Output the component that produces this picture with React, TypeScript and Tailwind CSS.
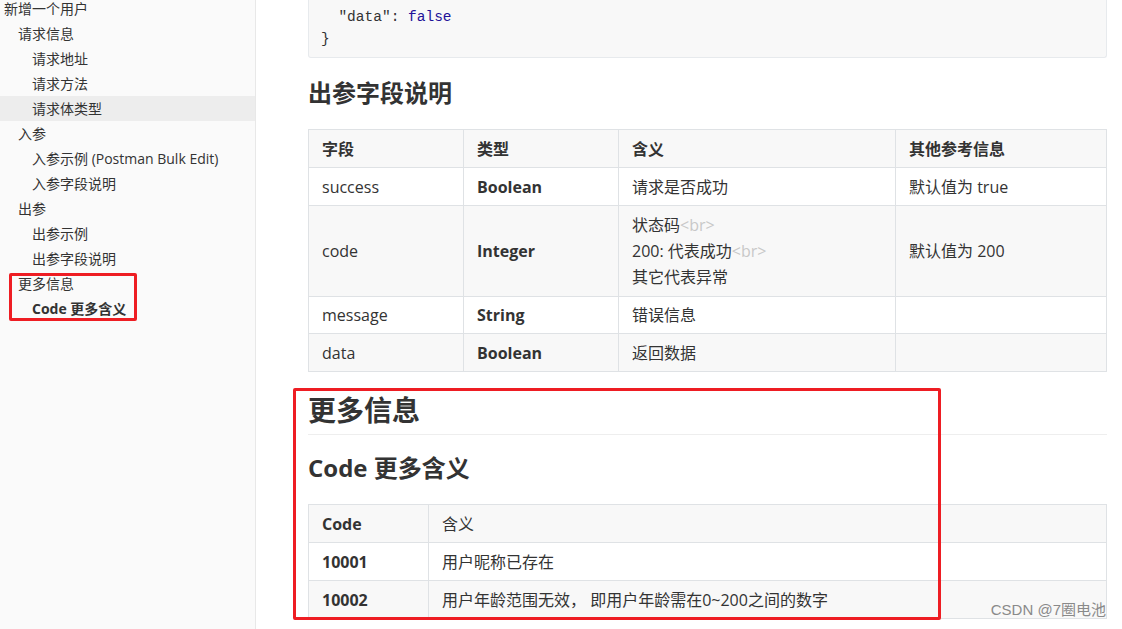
import React from "react";

const FONT = { fontFamily: '"Open Sans", "Noto Sans CJK SC", sans-serif' };
const MONO = { fontFamily: '"Liberation Mono", "DejaVu Sans Mono", monospace' };

interface NavItem {
  label: string;
  level: number;
  active?: boolean;
  bold?: boolean;
}

const nav: NavItem[] = [
  { label: "新增一个用户", level: 0 },
  { label: "请求信息", level: 1 },
  { label: "请求地址", level: 2 },
  { label: "请求方法", level: 2 },
  { label: "请求体类型", level: 2, active: true },
  { label: "入参", level: 1 },
  { label: "入参示例 (Postman Bulk Edit)", level: 2 },
  { label: "入参字段说明", level: 2 },
  { label: "出参", level: 1 },
  { label: "出参示例", level: 2 },
  { label: "出参字段说明", level: 2 },
  { label: "更多信息", level: 1 },
  { label: "Code 更多含义", level: 2, bold: true },
];

const indent = ["pl-[4px]", "pl-[18px]", "pl-[32px]"];

function Br() {
  return <span className="text-[#c8c8c8]">&lt;br&gt;</span>;
}

export default function App() {
  return (
    <div
      className="relative flex h-[629px] w-[1122px] overflow-hidden bg-white text-[#333]"
      style={FONT}
    >
      {/* sidebar outline */}
      <aside className="relative h-full w-[256px] shrink-0 border-r border-[#e8e8e8] bg-[#fafafa]">
        <ul className="-mt-[4px]">
          {nav.map((item) => (
            <li
              key={item.label}
              className={`flex h-[25px] items-center text-[14px] ${indent[item.level]} ${
                item.active ? "bg-[#ededed]" : ""
              } ${item.bold ? "font-bold" : ""}`}
            >
              {item.label}
            </li>
          ))}
        </ul>
        <div className="absolute left-[9px] top-[273px] h-[48px] w-[128px] rounded-[2px] border-[3px] border-[#ee1d23]" />
      </aside>

      {/* document */}
      <main className="relative flex-1 pl-[52px] pr-[15px]">
        <div
          className="rounded-b-[3px] border border-t-0 border-[#e7eaed] bg-[#f8f8f8] pb-[7px] pl-[12px] pt-[6px] text-[14.5px] leading-[22px]"
          style={MONO}
        >
          <div className="whitespace-pre">
            {"  "}
            <span className="text-[#333]">"data"</span>: <span className="text-[#221199]">false</span>
          </div>
          <div>{"}"}</div>
        </div>

        <h3 className="mt-[17px] text-[24px] font-bold leading-[36px]">出参字段说明</h3>

        <table className="mt-[18px] w-full border-collapse text-[16px]">
          <thead>
            <tr className="h-[38px] bg-[#f8f8f8] font-bold">
              <th className="w-[155px] border border-[#dfe2e5] px-[13px] text-left">字段</th>
              <th className="w-[155px] border border-[#dfe2e5] px-[13px] text-left">类型</th>
              <th className="w-[277px] border border-[#dfe2e5] px-[13px] text-left">含义</th>
              <th className="border border-[#dfe2e5] px-[13px] text-left">其他参考信息</th>
            </tr>
          </thead>
          <tbody>
            <tr className="h-[38px]">
              <td className="border border-[#dfe2e5] px-[13px]">success</td>
              <td className="border border-[#dfe2e5] px-[13px] font-bold">Boolean</td>
              <td className="border border-[#dfe2e5] px-[13px]">请求是否成功</td>
              <td className="border border-[#dfe2e5] px-[13px]">默认值为 true</td>
            </tr>
            <tr className="bg-[#f8f8f8]">
              <td className="border border-[#dfe2e5] px-[13px]">code</td>
              <td className="border border-[#dfe2e5] px-[13px] font-bold">Integer</td>
              <td className="border border-[#dfe2e5] px-[13px] py-[6px] leading-[26px]">
                <div>
                  状态码
                  <Br />
                </div>
                <div>
                  200: 代表成功
                  <Br />
                </div>
                <div>其它代表异常</div>
              </td>
              <td className="border border-[#dfe2e5] px-[13px]">默认值为 200</td>
            </tr>
            <tr className="h-[37px]">
              <td className="border border-[#dfe2e5] px-[13px]">message</td>
              <td className="border border-[#dfe2e5] px-[13px] font-bold">String</td>
              <td className="border border-[#dfe2e5] px-[13px]">错误信息</td>
              <td className="border border-[#dfe2e5] px-[13px]"></td>
            </tr>
            <tr className="h-[38px] bg-[#f8f8f8]">
              <td className="border border-[#dfe2e5] px-[13px]">data</td>
              <td className="border border-[#dfe2e5] px-[13px] font-bold">Boolean</td>
              <td className="border border-[#dfe2e5] px-[13px]">返回数据</td>
              <td className="border border-[#dfe2e5] px-[13px]"></td>
            </tr>
          </tbody>
        </table>

        <h2 className="mt-[21px] border-b border-[#eeeeee] pb-[7px] text-[28px] font-bold leading-[34px]">
          更多信息
        </h2>

        <h3 className="mt-[15px] text-[24px] font-bold leading-[36px]">Code 更多含义</h3>

        <table className="mt-[18px] w-full border-collapse text-[16px]">
          <thead>
            <tr className="h-[38px] bg-[#f8f8f8]">
              <th className="w-[120px] border border-[#dfe2e5] px-[13px] text-left font-bold">Code</th>
              <th className="border border-[#dfe2e5] px-[13px] text-left font-normal">含义</th>
            </tr>
          </thead>
          <tbody>
            <tr className="h-[38px]">
              <td className="border border-[#dfe2e5] px-[13px] font-bold">10001</td>
              <td className="border border-[#dfe2e5] px-[13px]">用户昵称已存在</td>
            </tr>
            <tr className="h-[38px] bg-[#f8f8f8]">
              <td className="border border-[#dfe2e5] px-[13px] font-bold">10002</td>
              <td className="border border-[#dfe2e5] px-[13px]">用户年龄范围无效， 即用户年龄需在0~200之间的数字</td>
            </tr>
          </tbody>
        </table>

        {/* annotation box */}
        <div className="absolute left-[37px] top-[388px] h-[232px] w-[648px] rounded-[2px] border-[3px] border-[#ee1d23]" />
      </main>

      <div
        className="absolute bottom-[8px] right-[16px] text-[15px] text-[#8a8a8a]"
        style={{ fontFamily: '"Liberation Sans", "Noto Sans CJK SC", sans-serif' }}
      >
        CSDN @7圈电池
      </div>
    </div>
  );
}
